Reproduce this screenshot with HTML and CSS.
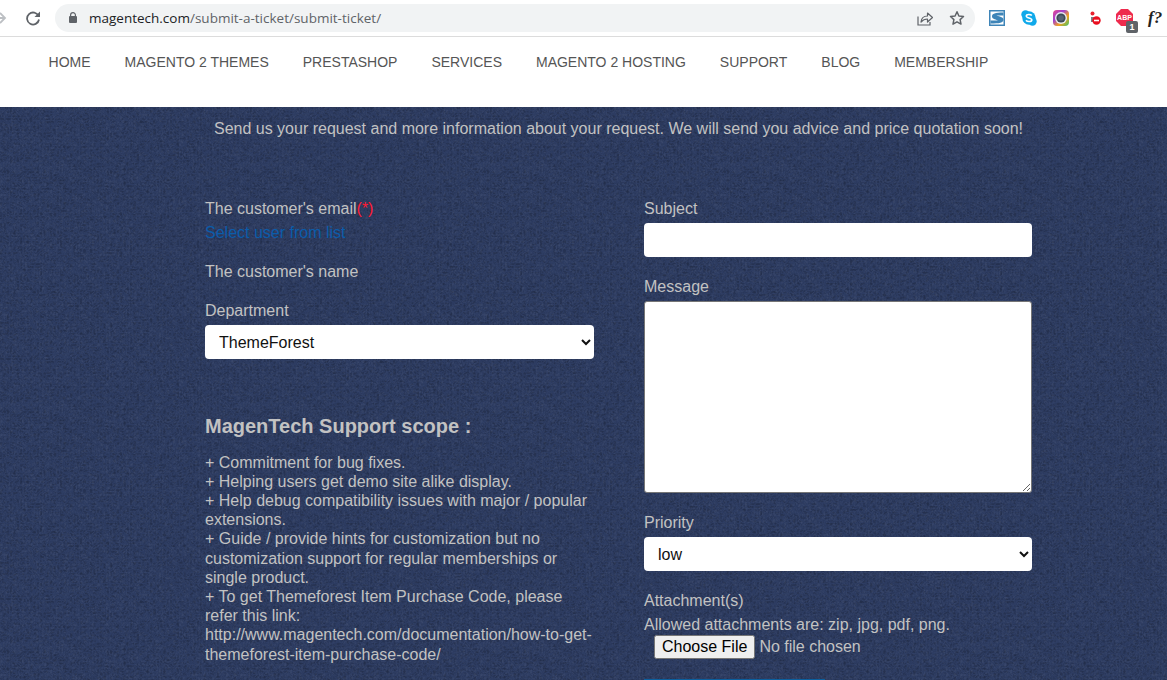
FILE: index.html
```html
<!DOCTYPE html>
<html lang="en">
<head>
<meta charset="utf-8">
<title>Submit a ticket</title>
<link rel="stylesheet" href="styles.css">
</head>
<body>
<header class="chrome">
  <svg class="ic-forward" viewBox="0 0 16 16" width="16" height="16"><path d="M0 8h13M8 3l5 5-5 5" fill="none" stroke="#bcbfc3" stroke-width="1.8"/></svg>
  <svg class="ic-reload" viewBox="0 0 16 16" width="16" height="16"><path d="M13.6 6.2A6 6 0 1 0 14 9.5" fill="none" stroke="#5f6368" stroke-width="1.8"/><path d="M15 1.5V7H9.5z" fill="#5f6368"/></svg>
  <div class="omnibox">
    <svg class="ic-lock" viewBox="0 0 8 11" width="8" height="11"><path d="M1.6 4.5V3a2.4 2.4 0 0 1 4.8 0v1.5" fill="none" stroke="#5f6368" stroke-width="1.2"/><rect x="0" y="4" width="8" height="7" rx="1" fill="#5f6368"/></svg>
    <div class="url"><span class="host">magentech.com</span>/submit-a-ticket/submit-ticket/</div>
    <svg class="ic-share" viewBox="0 0 16 16" width="16" height="16"><path d="M1 6.500V15h12v-3" fill="none" stroke="#5f6368" stroke-width="1.2"/><path d="M4 12c.4-4 3.200-6 6.500-6V3l5 4.500-5 4.500V9c-2.500 0-4.800 1-6.500 3z" fill="none" stroke="#5f6368" stroke-width="1.2" stroke-linejoin="round"/></svg>
    <svg class="ic-star" viewBox="0 0 16 16" width="16" height="16"><path d="M8 1.800l1.900 4.200 4.600.5-3.400 3.100.9 4.500L8 11.800l-4 2.300.9-4.500-3.400-3.100 4.600-.5z" fill="none" stroke="#5f6368" stroke-width="1.500" stroke-linejoin="round"/></svg>
  </div>
  <div class="extensions">
    <svg class="ext" viewBox="0 0 16 16" width="16" height="16"><rect width="16" height="16" fill="#3f85b8"/><rect x="1.500" y="1.500" width="13" height="13" fill="#fff"/><path d="M3 6.500C3 3.500 6 2.500 14.500 2.500v3H7.500c1 .8 7 1 7 4 0 3.500-4 4-13 4v-3h7.500C8 9.500 3 9.500 3 6.500z" fill="#3f85b8"/></svg>
    <svg class="ext" viewBox="0 0 16 16" width="16" height="16"><circle cx="4.500" cy="4.500" r="4.200" fill="#10a9ea"/><circle cx="11.500" cy="11.500" r="4.200" fill="#10a9ea"/><circle cx="8" cy="8" r="6.700" fill="#10a9ea"/><path d="M10.800 5.600C9.800 4.300 5.400 4 5.300 6.100c-.1 2.300 5.500 1.400 5.500 3.800 0 2.100-4.600 2.100-5.800.4" fill="none" stroke="#fff" stroke-width="1.600"/></svg>
    <svg class="ext" viewBox="0 0 16 16" width="16" height="16"><defs><linearGradient id="rb" x1="0" y1="0" x2="1" y2="1"><stop offset="0" stop-color="#e8468c"/><stop offset=".35" stop-color="#a23fd0"/><stop offset=".65" stop-color="#f2a41f"/><stop offset="1" stop-color="#39c46a"/></linearGradient></defs><rect width="16" height="16" rx="4" fill="url(#rb)"/><circle cx="8" cy="8" r="6" fill="#e9edf0"/><circle cx="8" cy="8" r="4.600" fill="#3d4a58"/><circle cx="8" cy="8" r="2.800" fill="#566575"/></svg>
    <svg class="ext ext-red" viewBox="0 0 12 14" width="12" height="14"><circle cx="3.500" cy="2.500" r="2" fill="#e8212f"/><path d="M2 6h3v5H2z" fill="#7a7f86"/><circle cx="7.500" cy="9.500" r="4.200" fill="#ea0f1f"/><rect x="5" y="8.700" width="5" height="1.600" fill="#fff"/></svg>
    <div class="abp">
      <svg viewBox="0 0 17 17" width="17" height="17"><path d="M5 0h7l5 5v7l-5 5H5l-5-5V5z" fill="#ee2a4d"/></svg>
      <span class="abp-text">ABP</span>
      <span class="abp-badge">1</span>
    </div>
    <span class="fq">f?</span>
  </div>
</header>

<nav class="nav">
  <a>HOME</a><a>MAGENTO 2 THEMES</a><a>PRESTASHOP</a><a>SERVICES</a><a>MAGENTO 2 HOSTING</a><a>SUPPORT</a><a>BLOG</a><a>MEMBERSHIP</a>
</nav>

<main class="main">
  <div class="content">
    <p class="intro">Send us your request and more information about your request. We will send you advice and price quotation soon!</p>
    <div class="columns">
      <section class="col">
        <div class="label">The customer's email<span class="req">(*)</span></div>
        <a class="pick">Select user from list</a>
        <div class="label name">The customer's name</div>
        <div class="label dept">Department</div>
        <select class="control"><option>ThemeForest</option></select>
        <h3 class="scope-title">MagenTech Support scope :</h3>
        <div class="scope">
          + Commitment for bug fixes.<br>
          + Helping users get demo site alike display.<br>
          + Help debug compatibility issues with major / popular extensions.<br>
          + Guide / provide hints for customization but no customization support for regular memberships or single product.<br>
          + To get Themeforest Item Purchase Code, please refer this link: http://www.magentech.com/documentation/how-to-get-themeforest-item-purchase-code/
        </div>
      </section>
      <section class="col">
        <div class="label">Subject</div>
        <input class="control" type="text">
        <div class="label gap-top">Message</div>
        <textarea class="message"></textarea>
        <div class="label gap-top">Priority</div>
        <select class="control"><option>low</option></select>
        <div class="label gap-top">Attachment(s)</div>
        <div class="allowed">Allowed attachments are: zip, jpg, pdf, png.</div>
        <input class="file" type="file">
        <button class="submit" type="button"></button>
      </section>
    </div>
  </div>
</main>
</body>
</html>
```
FILE: styles.css
```css
* { box-sizing: border-box; }
html, body { margin: 0; height: 680px; overflow: hidden; }
body { font-family: "Liberation Sans", Arial, sans-serif; font-size: 16px; background: #2b3a5e; }

.chrome {
  height: 37px;
  background: #fff;
  border-bottom: 1px solid #dcdcdc;
  display: flex;
  align-items: center;
  overflow: hidden;
  padding-bottom: 1px;
}
.ic-forward { margin-left: -8px; flex: none; }
.ic-reload { margin-left: 17px; flex: none; }
.omnibox {
  margin-left: 14px;
  width: 920px;
  height: 28px;
  border-radius: 14px;
  background: #f1f3f4;
  display: flex;
  align-items: center;
  padding: 0 10px 0 14px;
  flex: none;
}
.ic-lock { flex: none; }
.url {
  margin-left: 12px;
  flex: 1;
  font-family: "Open Sans", "Noto Sans", sans-serif;
  font-size: 13.5px;
  color: #5f6368;
  white-space: nowrap;
}
.host { color: #202124; }
.ic-share { margin-right: 16px; flex: none; }
.ic-star { flex: none; }
.extensions { display: flex; align-items: center; margin-left: 14px; flex: none; }
.ext { flex: none; margin-right: 16px; }
.ext-red { margin: 0 16px 0 4px; }
.abp { position: relative; width: 17px; height: 17px; margin-left: -1px; flex: none; }
.abp svg { display: block; }
.abp-text {
  position: absolute; left: 0; right: 0; top: 4px;
  font: bold 7px/9px "Liberation Sans", sans-serif;
  color: #fff; text-align: center;
}
.abp-badge {
  position: absolute; left: 10px; top: 12px;
  width: 12px; height: 12px; border-radius: 2px;
  background: #5f6368; color: #fff;
  font: bold 9px/12px "Liberation Sans", sans-serif; text-align: center;
}
.fq {
  margin-left: 15px;
  font: italic bold 17px/1 "Liberation Serif", serif;
  color: #222;
  white-space: nowrap;
}

.nav {
  height: 70px;
  background: #fff;
  display: flex;
  gap: 34px;
  padding: 17px 0 0 48.6px;
  font-size: 14px;
  line-height: 16px;
  color: #555;
  white-space: nowrap;
}

.main {
  height: 573px;
  overflow: hidden;
  color: #c2c2c2;
  line-height: 19px;
  background-color: #2d3c62;
  background-image: url("data:image/svg+xml,%3Csvg xmlns='http://www.w3.org/2000/svg' width='240' height='240'%3E%3Cfilter id='d' x='0' y='0' width='100%25' height='100%25'%3E%3CfeTurbulence type='turbulence' baseFrequency='.3 .36' numOctaves='2' seed='4' stitchTiles='stitch'/%3E%3CfeColorMatrix values='0 0 0 0 0 0 0 0 0 0 0 0 0 0 0 1.800 0 0 0 -.2'/%3E%3C/filter%3E%3Cfilter id='l' x='0' y='0' width='100%25' height='100%25'%3E%3CfeTurbulence type='turbulence' baseFrequency='.36 .3' numOctaves='2' seed='9' stitchTiles='stitch'/%3E%3CfeColorMatrix values='0 0 0 0 1 0 0 0 0 1 0 0 0 0 1 0 1.800 0 0 -.3'/%3E%3C/filter%3E%3Crect width='240' height='240' filter='url(%23d)' opacity='.22'/%3E%3Crect width='240' height='240' filter='url(%23l)' opacity='.06'/%3E%3C/svg%3E");
}
.content { width: 827px; margin-left: 205px; }
.intro { margin: 0; padding-top: 12px; text-align: center; }
.columns {
  display: grid;
  grid-template-columns: 389px 388px;
  column-gap: 50px;
  margin-top: 61px;
}
.col { min-width: 0; }
.label { line-height: 19px; }
.req { color: #ff1a33; }
.pick { display: block; margin-top: 5px; color: #0b5cab; }
.name { margin-top: 20px; }
.dept { margin-top: 20px; margin-bottom: 5px; }
.control {
  display: block;
  width: 100%;
  height: 34px;
  border: 0;
  border-radius: 4px;
  background: #fff;
  color: #111;
  padding: 0 10px;
  font: 16px "Liberation Sans", sans-serif;
}
.col > .label:first-child + .control { margin-top: 5px; }
.scope-title {
  margin: 56px 0 0;
  font-size: 20px;
  line-height: 22px;
  font-weight: bold;
}
.scope { margin-top: 15.6px; line-height: 19.2px; }
.gap-top { margin-top: 20px; margin-bottom: 5px; }
.message {
  display: block;
  width: 100%;
  height: 192px;
  border: 1px solid #767676;
  border-radius: 3px;
  background: #fff;
  margin: 0;
}
.allowed { margin-top: 5px; }
.file {
  display: block;
  margin: 1px 0 0 10px;
  font: 16px "Liberation Sans", sans-serif;
  color: #c2c2c2;
}
.submit {
  display: block;
  width: 181px;
  height: 40px;
  margin-top: 20px;
  border: 0;
  background: #0b5f9e;
}
```
